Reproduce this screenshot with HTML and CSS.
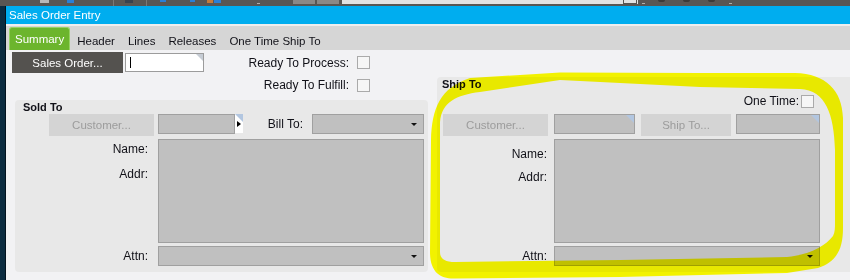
FILE: index.html
```html
<!DOCTYPE html>
<html lang="en">
<head>
    <meta charset="UTF-8">
    <meta name="viewport" content="width=device-width, initial-scale=1.0">
    <title>Sales Order Entry</title>
    <link rel="stylesheet" href="styles.css">
</head>
<body>
    <div class="topbar">
        <span class="tb tb-light"></span>
        <span class="tb tb-blue1"></span>
        <span class="tb-sep tb-sep1"></span>
        <span class="tb tb-dark"></span>
        <span class="tb-sep tb-sep2"></span>
        <span class="tb tb-blue2"></span>
        <span class="tb tb-blue3"></span>
        <span class="tb tb-orange"></span>
        <span class="tb tb-blue4"></span>
        <span class="tb-dash tb-dash1"></span>
        <span class="tb tb-btn tb-btn1"></span>
        <span class="tb tb-btn tb-btn2"></span>
        <span class="tb-search"><span class="tb-search-box"></span></span>
        <span class="tb-dash tb-dash2"></span>
        <span class="tb-dot tb-dot1"></span>
        <span class="tb-dot tb-dot2"></span>
        <span class="tb-dot tb-dot3"></span>
        <span class="tb-dash tb-dash3"></span>
    </div>

    <div class="window">
        <div class="edge"></div>
        <div class="app">
            <div class="titlebar">Sales Order Entry</div>

            <div class="tabs">
                <span class="tab tab-active">Summary</span>
                <span class="tab">Header</span>
                <span class="tab">Lines</span>
                <span class="tab">Releases</span>
                <span class="tab">One Time Ship To</span>
            </div>

            <div class="content">
                <div class="col-left">
                    <div class="order-grid">
                        <button type="button" class="btn-dark">Sales Order...</button>
                        <div class="input corner-gray"><span class="caret"></span></div>
                        <label class="flag-label">Ready To Process:</label>
                        <span class="check"></span>
                        <label class="flag-label flag-row2">Ready To Fulfill:</label>
                        <span class="check flag-row2"></span>
                    </div>

                    <section class="panel panel-sold">
                        <h2 class="panel-title">Sold To</h2>
                        <div class="form-grid">
                            <button type="button" class="btn-off">Customer...</button>
                            <div class="row-fields">
                                <div class="field field-cust"></div>
                                <div class="pointer"></div>
                                <label class="inline-label">Bill To:</label>
                                <div class="field combo field-bill"></div>
                            </div>
                            <div class="field-labels">
                                <span>Name:</span>
                                <span>Addr:</span>
                            </div>
                            <div class="field memo"></div>
                            <label class="row-label">Attn:</label>
                            <div class="field combo"></div>
                        </div>
                    </section>
                </div>

                <div class="col-right">
                    <section class="panel panel-ship">
                        <h2 class="panel-title">Ship To</h2>
                        <div class="one-time">
                            <label>One Time:</label>
                            <span class="check"></span>
                        </div>
                        <div class="form-grid">
                            <button type="button" class="btn-off">Customer...</button>
                            <div class="row-fields">
                                <div class="field corner-blue field-shipcust"></div>
                                <button type="button" class="btn-off btn-shipto">Ship To...</button>
                                <div class="field corner-blue field-shipto"></div>
                            </div>
                            <div class="field-labels">
                                <span>Name:</span>
                                <span>Addr:</span>
                            </div>
                            <div class="field memo"></div>
                            <label class="row-label">Attn:</label>
                            <div class="field combo"></div>
                        </div>
                    </section>
                </div>
            </div>
        </div>
    </div>

    <!-- highlighter mark drawn over the Ship To panel -->
    <svg class="highlight" width="850" height="280" viewBox="0 0 850 280">
        <path fill="#ffff00" fill-rule="evenodd"
              d="M430 252 L431 140 C432 108 440 88 470 78 L560 72.5 L700 73 L795 73 C826 74 842 90 843 118 L843 228 C843 250 836 262 818 268 L787 273 L620 277 L455 278.5 C440 279 430 272 430 252 Z
                 M440 252 C440 259 445 262 455 262 L620 260 L787 257 C812 254 825 246 833 236 C835 232 835 228 835 222 L835 150 C834 115 826 90 800 89 L700 87 L560 80 L480 92 C456 95 442 102 440 122 Z"/>
    </svg>
</body>
</html>
```

FILE: styles.css
```css
body {
    margin: 0;
    width: 850px;
    height: 280px;
    overflow: hidden;
    position: relative;
    background: #f4f4f6;
    font-family: "Liberation Sans", Arial, sans-serif;
    font-size: 11.5px;
    color: #111118;
}

/* toolbar strip at the very top */
.topbar {
    height: 6px;
    background: #595653;
    display: flex;
    align-items: flex-start;
}

.tb {
    height: 3px;
}

.tb-light { margin-left: 40px; width: 9px; background: #b8b8b8; }
.tb-blue1 { margin-left: 18px; width: 7px; background: #2a7fd6; }
.tb-dark { margin-left: 11px; width: 8px; background: #39424e; }
.tb-blue2 { margin-left: 13px; width: 6px; height: 2px; background: #2a7fd6; }
.tb-blue3 { margin-left: 24px; width: 5px; height: 2px; background: #2a7fd6; }
.tb-orange { margin-left: 12px; width: 6px; background: #c47a3a; }
.tb-blue4 { margin-left: 1px; width: 7px; background: #2a7fd6; }
.tb-btn { height: 4px; width: 22px; background: #8b8886; }
.tb-btn1 { margin-left: 33px; }
.tb-btn2 { margin-left: 2px; }

.tb-sep {
    width: 1px;
    height: 6px;
    background: #7b7875;
}

.tb-sep1 { margin-left: 39px; }
.tb-sep2 { margin-left: 13px; }

.tb-dash {
    width: 3px;
    height: 1px;
    margin-top: 3px;
    background: #b0aeab;
}

.tb-dash1 { margin-left: 36px; }
.tb-dash2 { margin-left: 4px; }
.tb-dash3 { margin-left: 14px; }

.tb-search {
    margin-left: 3px;
    width: 296px;
    height: 4px;
    background: #e2e2e2;
    display: flex;
    justify-content: flex-end;
}

.tb-search-box {
    width: 12px;
    height: 3px;
    margin-right: 1px;
    border: 1px solid #55524f;
    border-top: none;
}

.tb-dot {
    width: 7px;
    height: 2px;
    border-radius: 0 0 4px 4px;
    background: #3c3a38;
}

.tb-dot1 { margin-left: 13px; }
.tb-dot2 { margin-left: 18px; }
.tb-dot3 { margin-left: 18px; }

/* window frame */
.window {
    display: flex;
    height: 274px;
}

.edge {
    width: 5px;
    background: #0b2c40;
    border-right: 1px solid #02131e;
}

.app {
    flex: 1;
    display: flex;
    flex-direction: column;
    min-width: 0;
}

.titlebar {
    height: 18px;
    line-height: 18px;
    padding-left: 3px;
    background: #00adef;
    color: #fff;
    border-bottom: 2px solid #eeeeee;
}

.tabs {
    height: 24px;
    background: #d6d6d6;
    display: flex;
    align-items: flex-end;
    padding-left: 3px;
}

.tab {
    height: 23px;
    box-sizing: border-box;
    padding: 7px 6.5px 0;
    line-height: 14px;
}

.tab-active {
    padding: 4px 5px 0;
    margin-right: 0.5px;
    background: #6cb52d;
    color: #fff;
    border: 1px solid #98d266;
    border-bottom: none;
    border-radius: 3px 3px 0 0;
}

/* main area */
.content {
    flex: 1;
    display: grid;
    grid-template-columns: 431px 1fr;
    background: #f2f2f4;
    min-height: 0;
}

.col-left {
    display: flex;
    flex-direction: column;
    padding: 2px 0 8px 6px;
}

.col-right {
    display: flex;
    flex-direction: column;
    padding: 27px 0 8px 0;
}

.order-grid {
    display: grid;
    grid-template-columns: 111px 2px 79px 153px 13px;
    grid-template-rows: 21px 14px;
    row-gap: 5px;
    align-items: center;
}

button {
    font-family: inherit;
    font-size: 11.5px;
    padding: 0;
    border: none;
}

.btn-dark {
    grid-column: 1;
    height: 21px;
    background: #54524f;
    color: #fff;
}

.input {
    grid-column: 3;
    position: relative;
    height: 19px;
    box-sizing: border-box;
    border: 1px solid #9c9c9c;
    background: #fff;
}

.caret {
    position: absolute;
    left: 4px;
    top: 3px;
    width: 1px;
    height: 11px;
    background: #000;
}

.flag-label {
    grid-column: 4;
    text-align: right;
    padding-right: 8px;
    font-size: 12px;
}

.check {
    width: 13px;
    height: 13px;
    box-sizing: border-box;
    border: 1px solid #aaaaaa;
    background: #f6f6f6;
}

.order-grid .check {
    grid-column: 5;
}

.order-grid .flag-row2 {
    grid-row: 2;
}

/* group panels */
.panel {
    flex: 1;
    background: #e8e8e8;
    border-radius: 4px;
}

.panel-sold {
    margin: 8px 0 0 3px;
    width: 413px;
}

.panel-ship {
    border-radius: 4px 0 0 4px;
}

.panel-title {
    margin: 0;
    font-size: 11px;
    font-weight: bold;
    line-height: 14px;
    padding-left: 8px;
}

.panel-ship .panel-title {
    padding-left: 5px;
}

.one-time {
    display: flex;
    align-items: center;
    justify-content: flex-end;
    gap: 2px;
    width: 371px;
    height: 20px;
    margin-left: 6px;
    font-size: 12px;
}

.form-grid {
    display: grid;
    grid-template-columns: 105px 266px;
    grid-template-rows: 22px 104px 20px;
    row-gap: 3px;
    align-items: start;
    font-size: 12px;
}

.panel-sold .form-grid {
    column-gap: 4px;
    margin-left: 34px;
}

.panel-ship .form-grid {
    column-gap: 6px;
    margin: 3px 0 0 6px;
}

.btn-off {
    height: 22px;
    background: #d4d4d4;
    color: #9c9c9c;
}

.row-fields {
    display: flex;
    align-items: flex-start;
}

.field {
    position: relative;
    height: 20px;
    box-sizing: border-box;
    background: #c0c0c0;
    border: 1px solid #a0a0a0;
}

.memo {
    height: 104px;
}

.field-cust { width: 77px; }
.field-bill { width: 112px; }
.field-shipcust { width: 81px; }
.field-shipto { width: 84px; margin-left: 5px; }

.btn-shipto {
    width: 90px;
    margin-left: 6px;
}

.pointer {
    position: relative;
    width: 8px;
    height: 19px;
    background: #fff;
}

.pointer::before,
.corner-blue::before,
.corner-gray::before {
    content: "";
    position: absolute;
    top: 0;
    right: 0;
    width: 0;
    height: 0;
    border-top: 8px solid #b2c6e0;
    border-left: 8px solid transparent;
}

.corner-gray::before {
    border-top: 7px solid #c6ccd4;
    border-left: 7px solid transparent;
}

.pointer::after {
    content: "";
    position: absolute;
    left: 2px;
    top: 7px;
    border-top: 3px solid transparent;
    border-bottom: 3px solid transparent;
    border-left: 4px solid #000;
}

.combo::after {
    content: "";
    position: absolute;
    right: 6px;
    top: 8px;
    border-left: 3px solid transparent;
    border-right: 3px solid transparent;
    border-top: 3px solid #111;
}

.inline-label {
    flex: 1;
    text-align: right;
    padding-right: 9px;
    line-height: 20px;
}

.field-labels {
    text-align: right;
    padding: 3px 6px 0 0;
}

.field-labels span {
    display: block;
    height: 25px;
    line-height: 14px;
}

.panel-ship .field-labels {
    padding: 8px 1px 0 0;
}

.panel-ship .field-labels span {
    height: 23px;
}

.row-label {
    align-self: center;
    text-align: right;
    padding-right: 6px;
}

.panel-ship .row-label {
    padding-right: 1px;
}

/* yellow marker on top of everything */
.highlight {
    position: absolute;
    top: 0;
    left: 0;
    pointer-events: none;
    mix-blend-mode: multiply;
}
```
